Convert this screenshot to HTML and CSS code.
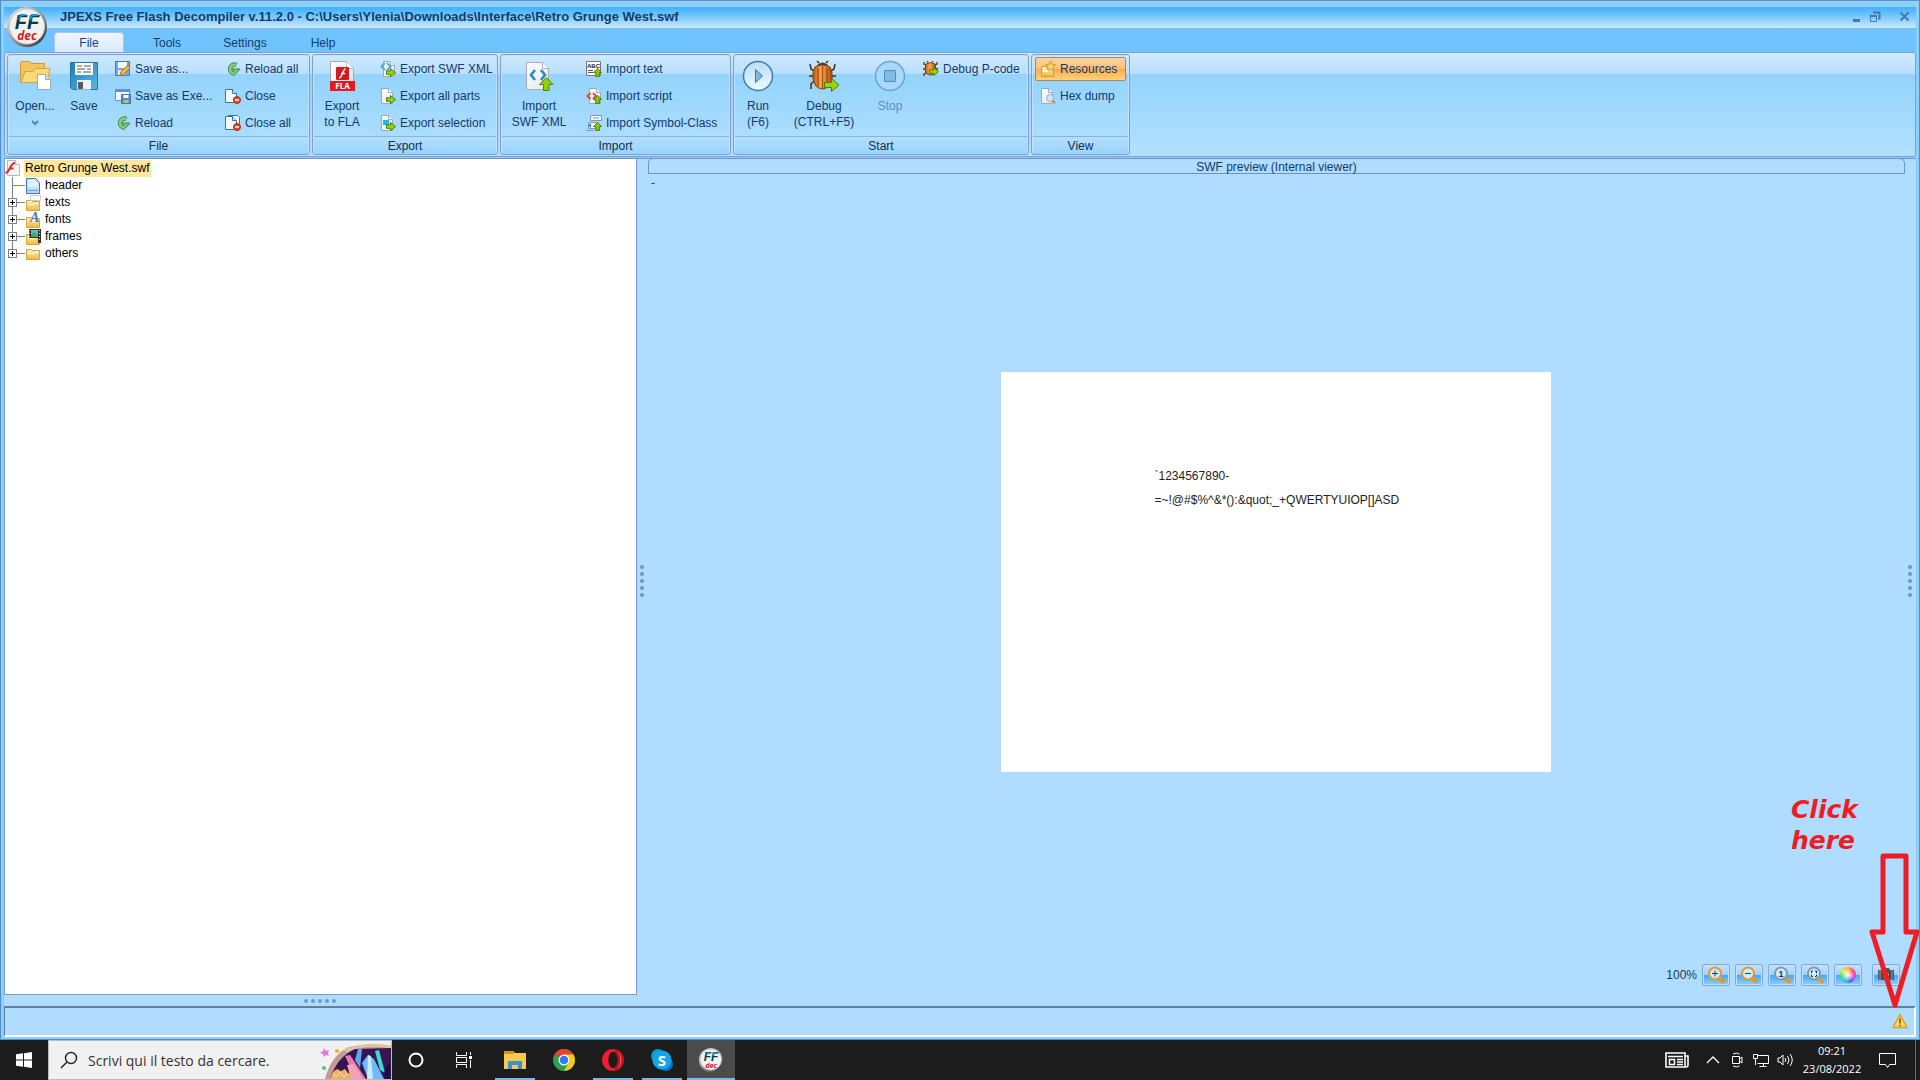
FILE: index.html
```html
<!DOCTYPE html>
<html lang="en">
<head>
<meta charset="utf-8">
<title>JPEXS Free Flash Decompiler v.11.2.0</title>
<link rel="stylesheet" href="styles.css">
</head>
<body>
<svg class="defs" aria-hidden="true">
  <defs>
    <linearGradient id="gFolder" x1="0" y1="0" x2="0" y2="1"><stop offset="0" stop-color="#fff0b0"/><stop offset="1" stop-color="#f0b848"/></linearGradient>
    <linearGradient id="gPaper" x1="0" y1="0" x2="1" y2="1"><stop offset="0" stop-color="#fff"/><stop offset="1" stop-color="#e2e5ea"/></linearGradient>
    <linearGradient id="gDisk" x1="0" y1="0" x2="1" y2="1"><stop offset="0" stop-color="#1b7fb8"/><stop offset="1" stop-color="#5cb6e4"/></linearGradient>
    <linearGradient id="gBug" x1="0" y1="0" x2="1" y2="0"><stop offset="0" stop-color="#b85a10"/><stop offset=".45" stop-color="#ffa84c"/><stop offset="1" stop-color="#a34a08"/></linearGradient>
    <linearGradient id="gBall" x1="0" y1="0" x2="1" y2="1"><stop offset="0" stop-color="#eee"/><stop offset=".5" stop-color="#999"/><stop offset="1" stop-color="#222"/></linearGradient>
    <linearGradient id="gRound" x1="0" y1="0" x2="0" y2="1"><stop offset="0" stop-color="#b9dcf5"/><stop offset="1" stop-color="#eefaff"/></linearGradient>
    <symbol id="arrowR" viewBox="0 0 10 9"><path d="M.5 2.800h4V.6l5 4-5 4V6.300h-4z" fill="#9bd20c" stroke="#47800a"/></symbol>
    <symbol id="arrowU" viewBox="0 0 9 9"><path d="M2.700 8.500v-4H.6l4-4 4 4H6.400v4z" fill="#8fca10" stroke="#47800a"/></symbol>
    <symbol id="paper" viewBox="0 0 16 16"><path d="M2.500.5h7l4 4v11h-11z" fill="url(#gPaper)" stroke="#9ba9b8"/><path d="M9.500.5v4h4" fill="#fff" stroke="#9ba9b8"/></symbol>
    <symbol id="bpaper" viewBox="0 0 16 16"><path d="M.5 1.500h7l4 4v9H.5z" fill="#f4faff" stroke="#3178a8"/><path d="M7.500 1.500v4h4" fill="#cfe6f6" stroke="#3178a8"/></symbol>
    <symbol id="logo" viewBox="0 0 40 40">
      <circle cx="20" cy="20" r="20" fill="url(#gBall)"/><circle cx="20" cy="19.500" r="17.500" fill="#f1f1f1" stroke="#ccc"/>
      <text x="20" y="22" text-anchor="middle" font-family="Liberation Sans, sans-serif" font-style="italic" font-weight="700" font-size="20" fill="#04394f">FF</text>
      <path d="M12 13l2-5h5M23 13l2-5h6" fill="none" stroke="#1499c9" stroke-width="2"/>
      <text x="20" y="33" text-anchor="middle" font-family="Open Sans, sans-serif" font-style="italic" font-weight="700" font-size="12" fill="#d81818">dec</text>
    </symbol>
    <symbol id="open" viewBox="0 0 32 32"><path d="M1.500 22.500V3.500q0-2 2-2h7l2 2h13v19z" fill="#f2c45c" stroke="#d09a38"/><path d="M2 22.500l4-11h8l3-3h14l-3 14z" fill="#fbd87c" stroke="#d8a23c"/><path d="M18.500 14.500h8l5 5v10h-13z" fill="#fff" stroke="#9aa"/><path d="M26.500 14.500v5h5" fill="#ddd" stroke="#9aa"/></symbol>
    <symbol id="save" viewBox="0 0 32 32"><path d="M2.500 2.500h27v27h-25l-2-2z" fill="url(#gDisk)" stroke="#2378aa"/><path d="M7 3h18v12H7z" fill="#fff"/><path d="M9 6h5m2 0h7M9 9h8m2 0h4M9 12h4m2 0h8" stroke="#556"/><path d="M9 20h14v9.500H9z" fill="#eef2f8"/><path d="M10 22h5v7h-5z" fill="#555b62"/></symbol>
    <symbol id="saveas" viewBox="0 0 16 16"><path d="M.5.5h14v14H.5z" fill="#7ba7e0" stroke="#4a76bb"/><path d="M3 1h9v6H3z" fill="#f4f8ff"/><path d="M3 9h7v5H3z" fill="#e5ecf8"/><path d="M5 14.500l1-4 7-6.500 2.500 2.500-7 7z" fill="#f7b83c" stroke="#a5702c"/><path d="M12 5l2.500 2.500" stroke="#e88"/></symbol>
    <symbol id="saveexe" viewBox="0 0 16 16"><path d="M.5 1.500h14v11H.5z" fill="#f4faff" stroke="#6c8fc8"/><path d="M0 1h15v3H0z" fill="#5f8fd8"/><path d="M6.500 6.500h9v9h-9z" fill="#5b87ca" stroke="#4872b8"/><path d="M8.500 7h5v3h-5z" fill="#fff"/><path d="M8.500 12h5v3h-5z" fill="#9bd55c"/></symbol>
    <symbol id="reload" viewBox="0 0 16 16"><path d="M11.500 4A4.500 4.500 0 1 0 10 12.500" fill="none" stroke="#3c8a48" stroke-width="4.400"/><path d="M6.500 8h8.500l-4.500 5z" fill="#7cc47c" stroke="#3c8a48"/><path d="M11.500 4A4.500 4.500 0 1 0 10 12.500" fill="none" stroke="#8acb88" stroke-width="2.600"/></symbol>
    <symbol id="minus" viewBox="0 0 8 8"><circle cx="4" cy="4" r="3.500" fill="#e5482c" stroke="#b62c14"/><path d="M2 4h4" stroke="#fff" stroke-width="1.500"/></symbol>
    <symbol id="close" viewBox="0 0 16 16"><use href="#bpaper"/><use href="#minus" x="8" y="8" width="8" height="8"/></symbol>
    <symbol id="closeall" viewBox="0 0 16 16"><path d="M3.500.5h9l2 2v11h-11z" fill="#fff" stroke="#3178a8"/><use href="#bpaper"/><use href="#minus" x="8" y="8" width="8" height="8"/></symbol>
    <symbol id="fla" viewBox="0 0 32 32"><path d="M4.500 1.500h16l7 7v14h-23z" fill="url(#gPaper)" stroke="#aaa"/><path d="M20.500 1.500v7h7" fill="#fff" stroke="#bbb"/><rect x="10" y="7" width="13" height="13" rx="1" fill="#d71920"/><path d="M19.500 9c-3 0-3 9-6.500 9m2-4.500h4" fill="none" stroke="#fff" stroke-width="1.500"/><path d="M4 21h25v10H4z" fill="#e21b20"/><text x="16.500" y="29" text-anchor="middle" font-family="Open Sans, sans-serif" font-size="8" font-weight="700" fill="#fff">FLA</text></symbol>
    <symbol id="exml" viewBox="0 0 16 16"><use href="#paper" x="1"/><path d="M5 2L1.500 5.500 5 9M7 2l3.500 3.500L7 9" fill="none" stroke="#5aa6e6" stroke-width="2"/><use href="#arrowR" x="6" y="7" width="10" height="9"/></symbol>
    <symbol id="eall" viewBox="0 0 16 16"><use href="#paper" x="-1"/><use href="#arrowR" x="6" y="7" width="10" height="9"/></symbol>
    <symbol id="esel" viewBox="0 0 16 16"><use href="#paper" x="-1"/><path d="M3 5h6v5H3z" fill="#12bde8"/><use href="#arrowR" x="6" y="7" width="10" height="9"/></symbol>
    <symbol id="ixml" viewBox="0 0 32 32"><path d="M3.500 2.500h16l6 6v21h-22z" fill="url(#gPaper)" stroke="#aab"/><path d="M19.500 2.500v6h6" fill="#fff" stroke="#aab"/><path d="M12 10l-4 5 4 5M18 10l4 5-4 5" fill="none" stroke="#2b8cbe" stroke-width="2.600"/><path d="M20.500 30.500v-6h-4l7-7 6.500 7h-4v6z" fill="#93cf0d" stroke="#4c860a"/></symbol>
    <symbol id="itext" viewBox="0 0 16 16"><path d="M.5.5h14v14H.5z" fill="#fff" stroke="#777"/><text x="7.500" y="7" text-anchor="middle" font-family="Liberation Sans, sans-serif" font-size="6" font-weight="700" fill="#222">ABC</text><path d="M2 9.500h5M2 11.500h5" stroke="#555"/><use href="#arrowU" x="7" y="7" width="9" height="9"/></symbol>
    <symbol id="iscript" viewBox="0 0 16 16"><use href="#paper" x="1"/><path d="M4.500 5L1.500 8l3 3M7 5l3 3-3 3" fill="none" stroke="#e8483c" stroke-width="2"/><use href="#arrowU" x="7" y="7" width="9" height="9"/></symbol>
    <symbol id="isym" viewBox="0 0 16 16"><path d="M4.500.5h11v5h-11zM2.500 7.500h8v6h-8z" fill="#f2f5fa" stroke="#8a98ac"/><path d="M7 3h6" stroke="#7a9ac0"/><path d="M5 8L2 10.500 5 13z" fill="#3b80d8"/><path d="M0 15.500h8" stroke="#8a98ac"/><use href="#arrowU" x="7" y="7" width="9" height="9"/></symbol>
    <symbol id="run" viewBox="0 0 32 32"><circle cx="16" cy="16" r="14.500" fill="url(#gRound)" stroke="#3f7db0" stroke-width="1.500"/><path d="M13.500 9.500v13l7-6.500z" fill="#7fb9e2" stroke="#3a78ac"/></symbol>
    <symbol id="stop" viewBox="0 0 32 32"><circle cx="16" cy="16" r="14.500" fill="#a9d8f8" stroke="#69a5d6" stroke-width="1.500"/><path d="M10.500 10.500h11v11h-11z" fill="#84bce6" stroke="#4a90cc"/></symbol>
    <symbol id="bug" viewBox="0 0 32 32"><path d="M6 11L3 9l-1-5M5 16H1M6 21l-3 3v5M23 11l3-2 1-5M24 16h4M23 21l2 2M11 3l-2-2m9 2l2-2" fill="none" stroke="#4a3426" stroke-width="1.600"/><path d="M9 5q5.500-5 11 0v3H9z" fill="#4b4038"/><path d="M7 7q7.500-4 15 0 5 10-1 19-6.500 6-13 0-6-9-1-19z" fill="url(#gBug)" stroke="#7c3c0c"/><path d="M10 8v18m4.500-20v23M19 8v18" stroke="#a14d10" stroke-width="1.300"/><path d="M16.500 22.500h7v-4l7.500 6.500-7.500 6.500v-4h-7z" fill="#9bd20c" stroke="#47800a"/></symbol>
    <symbol id="bugS" viewBox="0 0 16 16"><path d="M3 4L1 3V1M3 8H0M3 12l-2 1v2M12 4l2-1V1M12 8h3M5 1.500L4 0m5 1.500L10 0" fill="none" stroke="#4a3426" stroke-width="1.300"/><path d="M3 3q4.500-3 9 0 2 5 0 9-4.500 4-9 0-2-4 0-9z" fill="url(#gBug)" stroke="#7c3c0c"/><use href="#arrowR" x="6" y="6" width="10" height="9"/></symbol>
    <symbol id="res" viewBox="0 0 16 16"><path d="M1.500 15.500v-10h5l1 2h6v8z" fill="url(#gFolder)" stroke="#d59a32"/><path d="M10.500 0l1.600 3.300 3.400.4-2.500 2.400.7 3.500-3.200-1.800-3.200 1.800.7-3.500L5.500 3.700l3.400-.4z" fill="#fbd766" stroke="#cf9a33"/><path d="M3 10h5" stroke="#fff" stroke-width="2"/></symbol>
    <symbol id="hex" viewBox="0 0 16 16"><use href="#paper" x="-1"/><circle cx="10" cy="10" r="3.500" fill="#cfe5f8" stroke="#8fb4d6"/><path d="M12.500 12.500L15 15" stroke="#c98d4a" stroke-width="2"/></symbol>
    <symbol id="tFlash" viewBox="0 0 16 16"><path d="M2.500.5h8l4 4v11h-12z" fill="#f4f4f4" stroke="#b9b9b9"/><path d="M10.500.5v4h4" fill="#fff" stroke="#b9b9b9"/><path d="M10 3C5 3 5 12.500.5 13M4 8.500h4.500" fill="none" stroke="#e8262c" stroke-width="2.200"/></symbol>
    <symbol id="tHeader" viewBox="0 0 16 16"><path d="M1.500.5h9l4 4v11h-13z" fill="#b9daff" stroke="#3c74c4"/><path d="M2.500 1.500h7l4 4v4h-11z" fill="#dfefff"/><path d="M3 12.500h10" stroke="#6c9ee0"/></symbol>
    <symbol id="tFolder" viewBox="0 0 16 16"><path d="M1.500 13.500V3.500h5l1 1h7v9z" fill="url(#gFolder)" stroke="#dca436"/><path d="M3 7.500h6l1-1h3" stroke="#fff" fill="none"/></symbol>
    <symbol id="tTexts" viewBox="0 0 16 16"><use href="#tFolder" y="2"/><path d="M5.500.5h10v5h-10z" fill="#fff" stroke="#ccc"/></symbol>
    <symbol id="tFonts" viewBox="0 0 16 16"><use href="#tFolder" y="2"/><text x="5" y="10" font-family="Liberation Serif, serif" font-style="italic" font-weight="700" font-size="14" fill="#4778c8">A</text></symbol>
    <symbol id="tFrames" viewBox="0 0 16 16"><use href="#tFolder" y="2"/><path d="M4 0h12v14h-3V9H4z" fill="#333"/><path d="M6 1h7v7H6z" fill="#5cb8d8"/><path d="M6 8V6l3-3 4 4v1z" fill="#4aa83c"/><path d="M4.500 1v8M14.500 1v12" stroke="#ddd" stroke-dasharray="1 2"/></symbol>
    <symbol id="lens" viewBox="0 0 18 18"><path d="M12 12l4 3.500" stroke="#e09a2c" stroke-width="4" stroke-linecap="round"/><circle cx="8" cy="7.500" r="6" fill="#cdeaff" stroke-width="2"/></symbol>
    <symbol id="warn" viewBox="0 0 16 16"><path d="M8 1.500l7 13H1z" fill="#ffd95e" stroke="#e0a030" stroke-width="1.500" stroke-linejoin="round"/><path d="M8 5.500v5m0 1.200v1.500" stroke="#7c5410" stroke-width="1.600"/></symbol>
  </defs>
</svg>

<main class="window">
  <header class="titlebar">
    <h1 class="title">JPEXS Free Flash Decompiler v.11.2.0 - C:\Users\Ylenia\Downloads\Interface\Retro Grunge West.swf</h1>
    <button class="winbtn" aria-label="Minimize"><svg width="12" height="12"><path d="M2 9.500h7" stroke="#4a76ae" stroke-width="3"/></svg></button>
    <button class="winbtn restore" aria-label="Restore"><svg width="12" height="12"><path d="M4 1.500h6.500v6H9M1 5h6" fill="none" stroke="#4a76ae" stroke-width="2"/><path d="M1.500 4.500h6v6h-6z" fill="none" stroke="#4a76ae"/></svg></button>
    <button class="winbtn" aria-label="Close"><svg width="12" height="12"><path d="M1.500 1.500l8 8m0-8l-8 8" stroke="#4a76ae" stroke-width="2"/></svg></button>
  </header>
  <button class="app-menu" aria-label="Application menu"><svg width="40" height="40"><use href="#logo"/></svg></button>
  <nav class="tabs">
    <button class="tab active">File</button>
    <button class="tab">Tools</button>
    <button class="tab">Settings</button>
    <button class="tab">Help</button>
  </nav>

  <section class="ribbon">
    <section class="group g-file">
      <div class="group-body">
        <button class="big"><svg><use href="#open"/></svg><span>Open...</span><svg class="chev"><path d="M1 1l3 3 3-3" fill="none" stroke="#5585bd" stroke-width="2"/></svg></button>
        <button class="big"><svg><use href="#save"/></svg><span>Save</span></button>
        <div class="stack">
          <button class="small"><svg><use href="#saveas"/></svg>Save as...</button>
          <button class="small"><svg><use href="#saveexe"/></svg>Save as Exe...</button>
          <button class="small"><svg><use href="#reload"/></svg>Reload</button>
        </div>
        <div class="stack">
          <button class="small"><svg><use href="#reload"/></svg>Reload all</button>
          <button class="small"><svg><use href="#close"/></svg>Close</button>
          <button class="small"><svg><use href="#closeall"/></svg>Close all</button>
        </div>
      </div>
      <h2 class="group-label">File</h2>
    </section>
    <section class="group g-export">
      <div class="group-body">
        <button class="big"><svg><use href="#fla"/></svg><span>Export<br>to FLA</span></button>
        <div class="stack">
          <button class="small"><svg><use href="#exml"/></svg>Export SWF XML</button>
          <button class="small"><svg><use href="#eall"/></svg>Export all parts</button>
          <button class="small"><svg><use href="#esel"/></svg>Export selection</button>
        </div>
      </div>
      <h2 class="group-label">Export</h2>
    </section>
    <section class="group g-import">
      <div class="group-body">
        <button class="big"><svg><use href="#ixml"/></svg><span>Import<br>SWF XML</span></button>
        <div class="stack">
          <button class="small"><svg><use href="#itext"/></svg>Import text</button>
          <button class="small"><svg><use href="#iscript"/></svg>Import script</button>
          <button class="small"><svg><use href="#isym"/></svg>Import Symbol-Class</button>
        </div>
      </div>
      <h2 class="group-label">Import</h2>
    </section>
    <section class="group g-start">
      <div class="group-body">
        <button class="big"><svg><use href="#run"/></svg><span>Run<br>(F6)</span></button>
        <button class="big"><svg><use href="#bug"/></svg><span>Debug<br>(CTRL+F5)</span></button>
        <button class="big" disabled><svg><use href="#stop"/></svg><span>Stop</span></button>
        <div class="stack">
          <button class="small"><svg><use href="#bugS"/></svg>Debug P-code</button>
        </div>
      </div>
      <h2 class="group-label">Start</h2>
    </section>
    <section class="group g-view">
      <div class="group-body">
        <div class="stack">
          <button class="small pressed" aria-pressed="true"><svg><use href="#res"/></svg>Resources</button>
          <button class="small"><svg><use href="#hex"/></svg>Hex dump</button>
        </div>
      </div>
      <h2 class="group-label">View</h2>
    </section>
  </section>

  <div class="split">
    <aside class="tree-pane">
      <div class="root"><svg class="ico"><use href="#tFlash"/></svg><span class="root-name">Retro Grunge West.swf</span></div>
      <ul class="tree">
        <li><span class="branch"></span><svg class="ico"><use href="#tHeader"/></svg>header</li>
        <li><span class="branch"><button class="expand" aria-label="Expand texts"></button></span><svg class="ico"><use href="#tTexts"/></svg>texts</li>
        <li><span class="branch"><button class="expand" aria-label="Expand fonts"></button></span><svg class="ico"><use href="#tFonts"/></svg>fonts</li>
        <li><span class="branch"><button class="expand" aria-label="Expand frames"></button></span><svg class="ico"><use href="#tFrames"/></svg>frames</li>
        <li><span class="branch"><button class="expand" aria-label="Expand others"></button></span><svg class="ico"><use href="#tFolder"/></svg>others</li>
      </ul>
    </aside>
    <div class="divider"><i></i><i></i><i></i><i></i><i></i></div>
    <section class="preview">
      <h2 class="preview-title">SWF preview (Internal viewer)</h2>
      <p class="dash">-</p>
      <div class="stage-area">
        <div class="stage"><p class="swf-text">`1234567890-<br>=~!@#$%^&amp;*():&amp;quot;_+QWERTYUIOP[]ASD</p></div>
      </div>
      <div class="zoombar">
        <output>100%</output>
        <button class="tool" aria-label="Zoom in"><svg class="gold"><use href="#lens"/><path d="M5 7.500h6m-3-3v6" stroke="#246"/></svg></button>
        <button class="tool" aria-label="Zoom out"><svg class="gold"><use href="#lens"/><path d="M5 7.500h6" stroke="#246"/></svg></button>
        <button class="tool" aria-label="Original size"><svg class="grey"><use href="#lens"/><text x="8" y="11" text-anchor="middle" font-size="9" font-weight="700" fill="#135">1</text></svg></button>
        <button class="tool" aria-label="Fit"><svg class="grey"><use href="#lens"/><path d="M5.500 7V5H7m2 0h1.500v2m0 1.500v2H9m-2 0H5.500v-2" fill="none" stroke="#135"/></svg></button>
        <button class="tool" aria-label="Background color"><span class="wheel"></span></button>
        <button class="tool snap" aria-label="Snapshot"><svg><path d="M1 4h4l1-2h6l1 2h4v10H1z" fill="#555"/><path d="M3 4v10M15 4v10" stroke="#999"/><circle cx="9" cy="9" r="4" fill="#888" stroke="#333"/></svg></button>
      </div>
    </section>
    <div class="divider"><i></i><i></i><i></i><i></i><i></i></div>
  </div>
  <div class="hdivider"><i></i><i></i><i></i><i></i><i></i></div>
  <footer class="status"><button class="warn" aria-label="Show log"><svg class="ico"><use href="#warn"/></svg></button></footer>

  <div class="callout">
    <p>Click<br>here</p>
    <svg width="50" height="158"><path d="M14 5h23v76h11L26 154 3 81h11z" fill="none" stroke="#ee1c24" stroke-width="5" stroke-linejoin="round"/></svg>
  </div>
</main>

<footer class="taskbar">
  <button class="task" aria-label="Start"><svg width="16" height="16"><path d="M0 2.300L7 1.300V7.500H0zM8 1.200l8-1.200v7.500H8zM0 8.500h7v6.200l-7-1zM8 8.500h8V16l-8-1.200z" fill="#fff"/></svg></button>
  <label class="search">
    <svg width="18" height="18"><circle cx="11" cy="7" r="5.500" fill="none" stroke="#222" stroke-width="1.400"/><path d="M7 11l-6 6" stroke="#222" stroke-width="1.400"/></svg>
    <input type="text" aria-label="Search" placeholder="Scrivi qui il testo da cercare.">
    <svg class="art" width="72" height="38" viewBox="0 0 72 38">
      <path d="M6 38Q12 14 30 6q20-5 42 0v32z" fill="#c39a96"/><path d="M26 10q22-9 46-4" fill="none" stroke="#e2c3a4" stroke-width="3"/>
      <path d="M11 38Q18 16 36 8l36-1v31z" fill="#361650"/>
      <path d="M26 15l5-1 16 24H37z" fill="#e87cae"/><path d="M28 24l7-1 9 15H32z" fill="#f4a2b8"/><path d="M39 8h4l-2 19-5-8z" fill="#5aa8f0"/>
      <path d="M43 22l6-8 6 4 10 20H49z" fill="#6fb9fa"/><path d="M49 14l3 1 2 23h-6z" fill="#c8ecff"/><path d="M56 10l4-1 6 23-5-3z" fill="#41d8cf"/><path d="M66 38l-1-6 6-12v18z" fill="#1c0a55"/>
      <path d="M11 38l3-7 4-3 4 2 4-2 3 4 3 1 1 5z" fill="#eeb068"/><path d="M14 33l4 3 3-5 4 5 3-3" fill="none" stroke="#ffe0a8"/>
      <path d="M5 7l2 3 3-1-1 3 1 3-3-1-2 2-1-3-3-1 3-2z" fill="#dc78ee"/><circle cx="18" cy="10" r="2" fill="#f8b020"/><circle cx="5" cy="27" r="2" fill="#46c878"/>
    </svg>
  </label>
  <button class="task" aria-label="Cortana"><svg width="18" height="18"><circle cx="9" cy="9" r="6.500" fill="none" stroke="#fff" stroke-width="2"/></svg></button>
  <button class="task" aria-label="Task view"><svg width="18" height="16"><path d="M1.500 0v3.500h10V0M1.500 16v-3.500h10V16M1.500 5.500h10v5h-10zM15.500 0v3m0 5v8" fill="none" stroke="#fff"/><path d="M14 4h3v3h-3z" fill="#fff"/></svg></button>
  <div class="apps">
  <button class="task running" aria-label="File Explorer"><svg width="22" height="20"><path d="M0 1h9l2 2h11v16H0z" fill="#f9c94c"/><path d="M0 1h9l1 2-1 1H0z" fill="#d8951c"/><path d="M4 19v-8h14v8h-4v-4H8v4z" fill="#3c90d8"/></svg></button>
  <button class="task" aria-label="Chrome"><svg width="22" height="22" viewBox="0 0 22 22"><circle cx="11" cy="11" r="11" fill="#2ea14c"/><path d="M11 11L1.500 5.500A11 11 0 0 1 20.500 5.500z" fill="#e34133"/><path d="M11 5.500h9.500A11 11 0 0 1 11 22l4.800-8.300z" fill="#fbc716"/><circle cx="11" cy="11" r="5.500" fill="#fff"/><circle cx="11" cy="11" r="4.300" fill="#2f7cf0"/></svg></button>
  <button class="task running" aria-label="Opera"><svg width="22" height="22"><circle cx="11" cy="11" r="11" fill="#f01c30"/><path d="M13 .2a11 11 0 0 1 0 21.600z" fill="#c01020"/><path d="M13 1a11 11 0 0 1 0 20c7-3 7-17 0-20z" fill="#fb5a58"/><ellipse cx="11" cy="11" rx="4.700" ry="8.300" fill="#1c1c1c"/></svg></button>
  <button class="task running" aria-label="Skype"><svg width="22" height="22"><circle cx="7" cy="7" r="7" fill="#1296dc"/><circle cx="15" cy="15" r="7" fill="#0a70c8"/><circle cx="11" cy="11" r="9.500" fill="#12a5e8"/><text x="11" y="16.500" text-anchor="middle" font-family="Open Sans, sans-serif" font-size="15" font-weight="700" fill="#fff">S</text></svg></button>
  <button class="task running current" aria-label="FFDec"><svg width="24" height="24"><use href="#logo"/></svg></button>
  </div>
  <div class="tray">
    <button class="news" aria-label="News"><svg width="24" height="16"><path d="M1 1h19v14H1zM20 4h3v9q0 2-2 2h-2" fill="none" stroke="#fff" stroke-width="1.600"/><path d="M3 4.500h15M12 7.500h6m-6 2.500h6m-6 2.500h6" stroke="#fff" stroke-width="1.300"/><path d="M4.500 7.500h5v5h-5z" fill="none" stroke="#fff" stroke-width="1.500"/></svg></button>
    <button aria-label="Hidden icons"><svg width="14" height="8"><path d="M1 7l6-6 6 6" fill="none" stroke="#fff" stroke-width="1.300"/></svg></button>
    <button aria-label="Meet now"><svg width="14" height="16"><path d="M2.500 4.500h7v7h-7zM9.500 7l2.500-2v6L9.500 9M3 2q3.500-2 6.500 0M3 14q3.500 2 6.500 0" fill="none" stroke="#fff"/></svg></button>
    <button aria-label="Network"><svg width="17" height="15"><path d="M4.500 2.500h11v8h-11M.5 1.500h4v4h-4zM2.500 6v6M10.500 10.500v3m-4 0h7" fill="none" stroke="#fff"/></svg></button>
    <button aria-label="Volume"><svg width="17" height="14"><path d="M1 5h2l3-3v10L3 9H1zM8 5q1.500 2 0 4M10.500 3q3 4 0 8M13 1q4.500 6 0 12" fill="none" stroke="#fff"/></svg></button>
    <time class="clock">09:21<br>23/08/2022</time>
    <button class="notes" aria-label="Notifications"><svg width="17" height="17"><path d="M.5 1.500h16v11h-6l-2 3-2-3h-6z" fill="none" stroke="#fff"/></svg></button>
    <button class="desk" aria-label="Show desktop"></button>
  </div>
</footer>
</body>
</html>
```
FILE: styles.css
```css
* { box-sizing: border-box; }
body {
  margin: 0;
  min-height: 100vh;
  display: flex;
  flex-direction: column;
  font: 12px/16px "Liberation Sans", Arial, sans-serif;
  color: #14396b;
  background: #b0dcff;
}
h1, h2, p, ul { margin: 0; padding: 0; font: inherit; }
button { border: 0; padding: 0; background: none; color: inherit; font: inherit; }
svg { display: block; flex: none; }
.defs { position: absolute; width: 0; height: 0; }

.window {
  position: relative;
  flex: 1;
  display: flex;
  flex-direction: column;
  padding: 6px 3px 2px;
  border: 1px solid #4f8cc8;
  border-top-color: #6590c4;
  background: #8dcffb;
}
.titlebar {
  display: flex;
  align-items: center;
  height: 22px;
  padding: 0 5px 2px 56px;
  border-bottom: 1px solid #84b9dd;
  background: linear-gradient(#40b0fc, #6fc4fc 40%, #cdeaff);
}
.title {
  flex: 1;
  font-size: 13px;
  font-weight: 700;
  line-height: 19px;
  color: #123d66;
  white-space: nowrap;
}
.winbtn { width: 12px; height: 12px; margin-left: 6px; }
.restore { margin-right: 12px; }
.app-menu { position: absolute; left: 6px; top: 6px; width: 40px; height: 40px; border-radius: 50%; z-index: 1; }

.tabs {
  display: flex;
  gap: 8px;
  height: 23px;
  padding: 3px 0 0 50px;
  background: #70c4fd;
}
.tab { width: 70px; height: 20px; padding-top: 2px; line-height: 16px; }
.active {
  border: 1px solid #a9c6ee;
  border-bottom: 0;
  border-radius: 4px 4px 0 0;
  padding-top: 1px;
  background: linear-gradient(#eef6ff, #dbeafd);
  color: #15428b;
}

.ribbon {
  display: flex;
  gap: 2px;
  height: 105px;
  padding: 1px 2px;
  border: 1px solid #7d9fd3;
  border-radius: 3px;
  background: linear-gradient(#d2eafe, #b7dffc 21px, #94d3fb 21px, #b2e0ff);
}
.group {
  display: flex;
  flex-direction: column;
  min-width: 0;
  border: 1px solid #7f9fd2;
  border-radius: 3px;
  box-shadow: inset 0 0 0 1px #c4e1fb;
}
.g-file { flex: 0 0 303px; }
.g-export { flex: 0 0 186px; }
.g-import { flex: 0 0 231px; }
.g-start { flex: 0 0 296px; }
.g-view { flex: 0 0 99px; }
.group-body { display: grid; flex: 1; }
.g-file .group-body { grid-template-columns: 54px 44px 110px 1fr; }
.g-export .group-body { grid-template-columns: 58px 1fr; }
.g-import .group-body { grid-template-columns: 76px 1fr; }
.g-start .group-body { grid-template-columns: 48px 84px 48px 1fr; }
.group-label {
  height: 18px;
  margin: 0 1px;
  border-top: 1px solid #85b5e2;
  text-align: center;
  line-height: 18px;
  color: #15304e;
  background: linear-gradient(#b4deff, #98d4fd);
}
.big {
  display: flex;
  flex-direction: column;
  align-items: center;
  padding-top: 5px;
  text-align: center;
  white-space: nowrap;
}
.big svg { width: 32px; height: 32px; margin-bottom: 6px; }
.big .chev { width: 8px; height: 6px; margin: 6px 0 0; }
.big:disabled { color: #5f8fc0; }
.stack { display: flex; flex-direction: column; gap: 3px; padding: 2px 0 0 4px; }
.g-view .stack { padding: 2px 3px 0; }
.small {
  display: flex;
  align-items: center;
  gap: 4px;
  height: 24px;
  padding: 0 0 0 4px;
  border: 1px solid transparent;
  white-space: nowrap;
}
.small svg { width: 16px; height: 16px; }
.pressed {
  border-color: #a08c68;
  border-radius: 2px;
  background: linear-gradient(#fbd2a0, #fcc07a 50%, #fda948 50%, #fdd27c);
}

.split { flex: 1; display: flex; margin-top: 1px; background: #b0dcff; border-top: 1px solid #6f95cb; }
.tree-pane {
  flex: 0 0 633px;
  padding-top: 1px;
  border: 1px solid #7a9bcf;
  border-top: 0;
  background: #fff;
  color: #000;
}
.ico { width: 16px; height: 16px; }
.root { display: flex; height: 17px; gap: 3px; }
.root-name { padding: 0 1px; line-height: 17px; background: #ffe79c; }
.tree { list-style: none; }
.tree li { display: flex; align-items: center; height: 17px; padding-left: 3px; gap: 4px; line-height: 17px; }
.branch {
  display: flex;
  align-items: center;
  width: 17px;
  height: 17px;
  background:
    linear-gradient(#808080, #808080) 4px 0 / 1px 17px no-repeat,
    linear-gradient(#808080, #808080) 4px 8px / 13px 1px no-repeat;
}
.tree li:last-child .branch {
  background:
    linear-gradient(#808080, #808080) 4px 0 / 1px 9px no-repeat,
    linear-gradient(#808080, #808080) 4px 8px / 13px 1px no-repeat;
}
.branch + .ico { margin-left: -4px; }
.expand {
  width: 9px;
  height: 9px;
  border: 1px solid #808080;
  background:
    linear-gradient(#000, #000) 1px 3px / 5px 1px no-repeat,
    linear-gradient(#000, #000) 3px 1px / 1px 5px no-repeat,
    #fff;
}
.divider {
  flex: 0 0 11px;
  display: flex;
  flex-direction: column;
  align-items: center;
  justify-content: center;
  gap: 3px;
  padding: 8px 2px 0 0;
}
.divider i, .hdivider i { width: 4px; height: 4px; border-radius: 50%; background: #6c97cd; }
.hdivider { display: flex; gap: 3px; align-items: center; height: 11px; padding-left: 300px; background: #b0dcff; }

.preview { flex: 1; display: flex; flex-direction: column; }
.preview-title {
  height: 16px;
  margin-top: -1px;
  border: 1px solid #6f90c6;
  border-radius: 5px 5px 0 0;
  line-height: 16px;
  text-align: center;
  color: #123c69;
}
.dash { height: 18px; padding: 1px 3px 0; }
.stage-area { flex: 1; display: grid; place-items: center; padding: 0 2px 2px 0; }
.stage { width: 550px; height: 400px; padding: 92px 152px 0 154px; background: #fff; }
.swf-text { overflow: hidden; white-space: nowrap; line-height: 24px; color: #222; }
.zoombar { display: flex; align-items: center; justify-content: flex-end; gap: 5px; height: 42px; padding: 2px 5px 0 0; }
.tool {
  display: grid;
  place-items: center;
  width: 28px;
  height: 22px;
  border: 1px solid #7fa9de;
  border-radius: 2px;
  box-shadow: inset 0 0 0 1px #c3dffa;
  background: linear-gradient(#c6e1fc, #9fd0fb 50%, #3fa7fb 50%, #8fd1ff);
}
.tool svg { width: 18px; height: 18px; }
.gold { stroke: #e39a2c; }
.grey { stroke: #8599ad; }
.tool text { stroke: none; }
.snap { margin-left: 5px; }
.snap svg { stroke: none; }
.wheel {
  width: 16px;
  height: 16px;
  border-radius: 50%;
  background: radial-gradient(#fff, transparent 60%), conic-gradient(#ffb030, #ff4060, #e040e0, #5060f0, #30c0f0, #40e060, #e0f040, #ffb030);
}

.status {
  display: flex;
  align-items: center;
  justify-content: flex-end;
  height: 31px;
  padding: 0 6px 2px 0;
  border: 2px solid #fff;
  border-top-color: #60809f;
  border-left: 1px solid #60809f;
  background: #b0dcff;
}
.warn { width: 16px; height: 16px; }

.callout {
  position: absolute;
  right: 0;
  bottom: 30px;
  display: flex;
  pointer-events: none;
}
.callout p {
  margin-top: -57px;
  width: 78px;
  height: 62px;
  font: italic 700 25px/31px "DejaVu Sans", Verdana, sans-serif;
  color: #ee1c24;
}

.taskbar { display: flex; height: 40px; background: #1c1c1c; color: #fff; }
.task { display: grid; place-items: center; width: 48px; height: 40px; }
.search {
  display: flex;
  align-items: center;
  width: 344px;
  padding-left: 11px;
  border: 1px solid #bbb;
  background: #f1f1f1;
}
.search input {
  flex: 1;
  min-width: 0;
  height: 30px;
  margin-left: 10px;
  padding: 0;
  border: 0;
  background: none;
  font: 14px/20px "Open Sans", "Noto Sans", sans-serif;
}
.search input::placeholder { color: #333; opacity: 1; }
.apps { display: flex; gap: 1px; margin-left: 3px; }
.running {
  background: linear-gradient(#76b9ed, #76b9ed) 50% 100% / 40px 2px no-repeat;
}
.current {
  background: linear-gradient(#76b9ed, #76b9ed) 50% 100% / 48px 2px no-repeat, #4b4b4b;
}
.tray { display: flex; align-items: center; margin-left: auto; }
.tray button { display: grid; place-items: center; width: 24px; height: 40px; }
.tray .news { width: 48px; }
.clock { width: 70px; font: 11px/18px "Open Sans", "Noto Sans", sans-serif; text-align: center; }
.tray .notes { width: 48px; padding-right: 8px; }
.tray .desk { width: 5px; border-left: 1px solid #666; }
```
